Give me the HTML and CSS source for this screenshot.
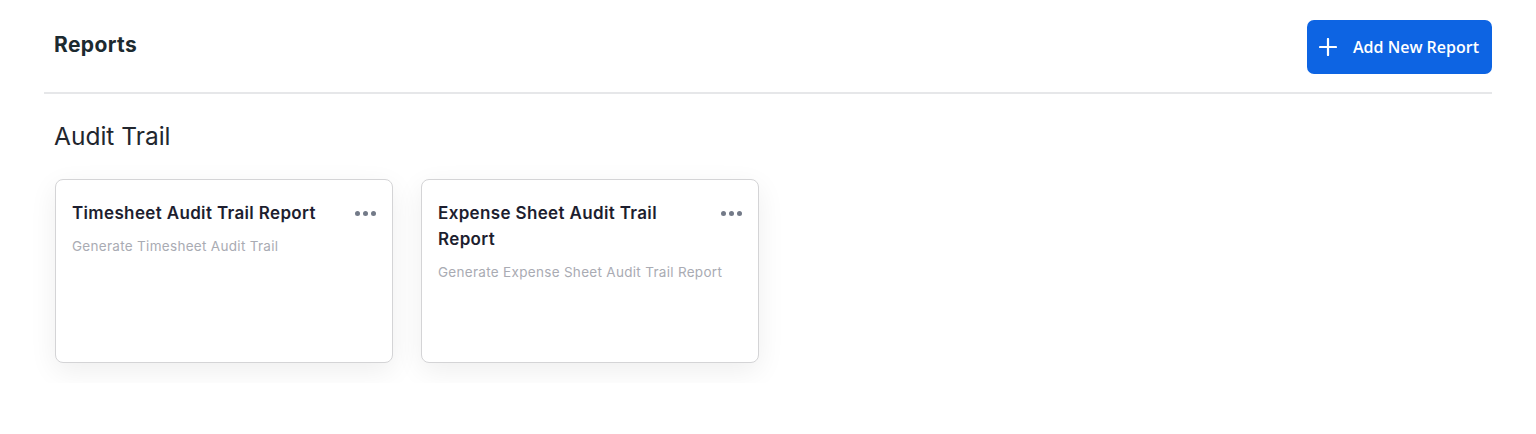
FILE: index.html
```html
<!DOCTYPE html>
<html lang="en">
<head>
    <meta charset="UTF-8">
    <title>Reports</title>
    <link rel="stylesheet" href="styles.css">
</head>
<body>
    <div class="page">
        <!-- Page header -->
        <div class="page-header">
            <h1>Reports</h1>
            <button class="add-button" type="button">
                <svg width="18" height="18" viewBox="0 0 18 18"><path d="M9 1v16M1 9h16" stroke="#fff" stroke-width="2.2" stroke-linecap="round"/></svg>
                <span>Add New Report</span>
            </button>
        </div>

        <h2 class="section-title">Audit Trail</h2>

        <div class="card-list">
            <div class="report-card">
                <div class="card-top">
                    <h3>Timesheet Audit Trail Report</h3>
                    <span class="card-menu"><i></i><i></i><i></i></span>
                </div>
                <p>Generate Timesheet Audit Trail</p>
            </div>
            <div class="report-card">
                <div class="card-top">
                    <h3>Expense Sheet Audit Trail Report</h3>
                    <span class="card-menu"><i></i><i></i><i></i></span>
                </div>
                <p>Generate Expense Sheet Audit Trail Report</p>
            </div>
        </div>
    </div>
</body>
</html>
```

FILE: styles.css
```css
* {
    margin: 0;
    padding: 0;
    box-sizing: border-box;
}

body {
    font-family: 'Inter', 'Lato', sans-serif;
    background-color: #fff;
    color: #1e2230;
}

.page {
    padding: 20px 44px;
}

/* Header */
.page-header {
    display: flex;
    justify-content: space-between;
    align-items: center;
    padding: 0 0 18px 10px;
    border-bottom: 2px solid #e6e7e9;
}

.page-header h1 {
    font-size: 21px;
    font-weight: 700;
    letter-spacing: 0.4px;
    color: #1c2a30;
    margin-top: -6px;
}

.add-button {
    display: flex;
    align-items: center;
    gap: 16px;
    height: 54px;
    padding: 0 13px 0 12px;
    background-color: #0d64e3;
    color: #fff;
    border: none;
    border-radius: 7px;
    font-family: 'Open Sans', sans-serif;
    font-size: 16px;
    font-weight: 600;
    cursor: pointer;
}

.add-button svg {
    margin-top: -1px;
}

/* Section */
.section-title {
    font-size: 24.5px;
    font-weight: 400;
    color: #22262e;
    margin: 27px 0 0 10px;
}

.card-list {
    display: flex;
    gap: 28px;
    margin: 28px 0 0 11px;
}

.report-card {
    width: 338px;
    height: 184px;
    padding: 20px 16px 16px 16px;
    border: 1px solid #d4d4d6;
    border-radius: 8px;
    box-shadow: 0 8px 28px rgba(0, 0, 0, 0.07);
    background: #fff;
}

.card-top {
    display: flex;
    justify-content: space-between;
    align-items: flex-start;
}

.report-card h3 {
    font-size: 17px;
    font-weight: 600;
    line-height: 26px;
    letter-spacing: 0.35px;
    color: #1d1e2f;
    max-width: 262px;
}

.card-menu {
    display: flex;
    gap: 3px;
    margin-top: 11px;
}

.card-menu i {
    width: 5px;
    height: 5px;
    border-radius: 50%;
    background: #737a88;
}

.report-card p {
    margin-top: 12px;
    font-size: 13.5px;
    letter-spacing: 0.3px;
    color: #a9abb3;
}
```
